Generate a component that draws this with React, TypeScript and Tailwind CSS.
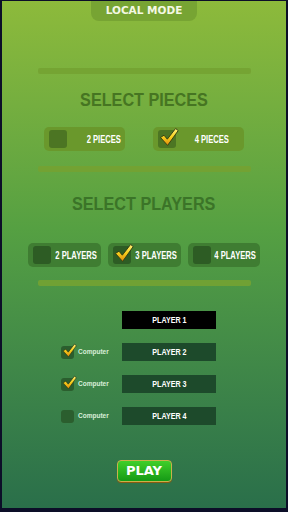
import React from "react";

const Check = ({ size = 20 }: { size?: number }) => (
  <svg width={size} height={size} viewBox="0 0 20 20" className="absolute left-[1px] top-[-3px]">
    <defs>
      <linearGradient id="chk" x1="0" y1="0" x2="0" y2="1">
        <stop offset="0" stopColor="#fff07a" />
        <stop offset="0.5" stopColor="#f6cf1c" />
        <stop offset="1" stopColor="#e08a0c" />
      </linearGradient>
    </defs>
    <path
      d="M1.5 10.5 L5 8.2 L8.3 12.2 L16.6 1.5 L19.2 3.6 L8.6 18.4 Z"
      fill="url(#chk)"
      stroke="#2e3a12"
      strokeWidth="0.9"
      strokeLinejoin="round"
    />
  </svg>
);

const Box = ({ checked, size, bg }: { checked?: boolean; size: number; bg: string }) => (
  <div className={`relative shrink-0 rounded-[3px] ${bg}`} style={{ width: size, height: size }}>
    {checked && <Check size={size + 2} />}
  </div>
);

const sans = { fontFamily: '"Liberation Sans", Arial, sans-serif' };
const gothic = { fontFamily: '"DejaVu Sans", "Lato", sans-serif' };

const Option = ({
  label,
  checked,
  w,
  bg,
  boxBg,
  pad = "",
}: {
  label: string;
  checked?: boolean;
  w: string;
  bg: string;
  boxBg: string;
  pad?: string;
}) => (
  <div className={`flex h-[24px] items-center rounded-[5px] pl-[5px] ${w} ${bg}`}>
    <Box size={18} checked={checked} bg={boxBg} />
    <div className={`flex min-w-0 flex-1 justify-center ${pad}`}>
      <span className="inline-block scale-x-[0.69] whitespace-nowrap text-[11px] font-bold text-white" style={sans}>
        {label}
      </span>
    </div>
  </div>
);

const PlayerRow = ({ name, computer, checked, dark }: { name: string; computer?: boolean; checked?: boolean; dark?: boolean }) => (
  <div className="ml-[59px] flex h-[18px] w-[155px] items-center self-start">
    <div className="flex w-[61px] items-center gap-[4px]">
      {computer && (
        <>
          <Box size={13} checked={checked} bg="bg-[#2b5e2e]" />
          <span className="text-[6.5px] font-bold text-[#d9efd9]" style={sans}>
            Computer
          </span>
        </>
      )}
    </div>
    <div className={`flex h-[18px] w-[94px] items-center justify-center ${dark ? "bg-black" : "bg-[#1d4a2b]"}`}>
      <span className="inline-block scale-x-[0.84] whitespace-nowrap text-[8.5px] font-bold text-white" style={sans}>
        {name}
      </span>
    </div>
  </div>
);

const Divider = ({ mt }: { mt: string }) => <div className={`h-[6px] w-[213px] rounded-[2px] bg-[#74a232]/90 ${mt}`} />;

const Title = ({ text, mt, color }: { text: string; mt: string; color: string }) => (
  <h2
    className={`flex h-[20px] items-center justify-center whitespace-nowrap text-[18px] font-bold leading-[20px] ${mt} ${color}`}
    style={sans}
  >
    <span className="inline-block scale-x-[0.9]">{text}</span>
  </h2>
);

export default function App() {
  return (
    <div className="h-[512px] w-[288px] bg-[#0c0e28] pb-[4px] pl-[2px] pr-[2px] pt-[1px]">
      <div className="flex h-full flex-col items-center bg-gradient-to-b from-[#8dba3b] via-[#55a042] via-45% to-[#2a6f4a]">
        <div
          className="flex h-[20px] w-[106px] items-center justify-center rounded-b-[8px] bg-[#77a433] text-[10.5px] font-bold text-[#f4f8e4]"
          style={gothic}
        >
          LOCAL MODE
        </div>

        <Divider mt="mt-[47px]" />
        <Title text="SELECT PIECES" mt="mt-[16px]" color="text-[#467522]" />
        <div className="mt-[17px] flex gap-[28px]">
          <Option label="2 PIECES" pad="pl-[16px]" w="w-[81px]" bg="bg-[#6a982c]" boxBg="bg-[#4c7523]" />
          <Option label="4 PIECES" pad="pl-[4px]" checked w="w-[91px]" bg="bg-[#6a982c]" boxBg="bg-[#4c7523]" />
        </div>

        <Divider mt="mt-[15px]" />
        <Title text="SELECT PLAYERS" mt="mt-[22px]" color="text-[#3b7428]" />
        <div className="mt-[29px] flex gap-[7px]">
          <Option label="2 PLAYERS" w="w-[73px]" bg="bg-[#3f7d32]" boxBg="bg-[#2d5c24]" />
          <Option label="3 PLAYERS" checked w="w-[73px]" bg="bg-[#3f7d32]" boxBg="bg-[#2d5c24]" />
          <Option label="4 PLAYERS" w="w-[72px]" bg="bg-[#3f7d32]" boxBg="bg-[#2d5c24]" />
        </div>

        <Divider mt="mt-[13px]" />

        <div className="mt-[25px] flex w-full flex-col gap-[14px]">
          <PlayerRow name="PLAYER 1" dark />
          <PlayerRow name="PLAYER 2" computer checked />
          <PlayerRow name="PLAYER 3" computer checked />
          <PlayerRow name="PLAYER 4" computer />
        </div>

        <button
          className="mt-[35px] flex h-[22px] w-[55px] items-center justify-center rounded-[4px] border border-[#c9b24a] bg-gradient-to-b from-[#3fcf2a] to-[#149a16] text-[13px] font-bold text-white shadow-[0_1px_0_#8a5a10]"
          style={gothic}
        >
          PLAY
        </button>
      </div>
    </div>
  );
}
